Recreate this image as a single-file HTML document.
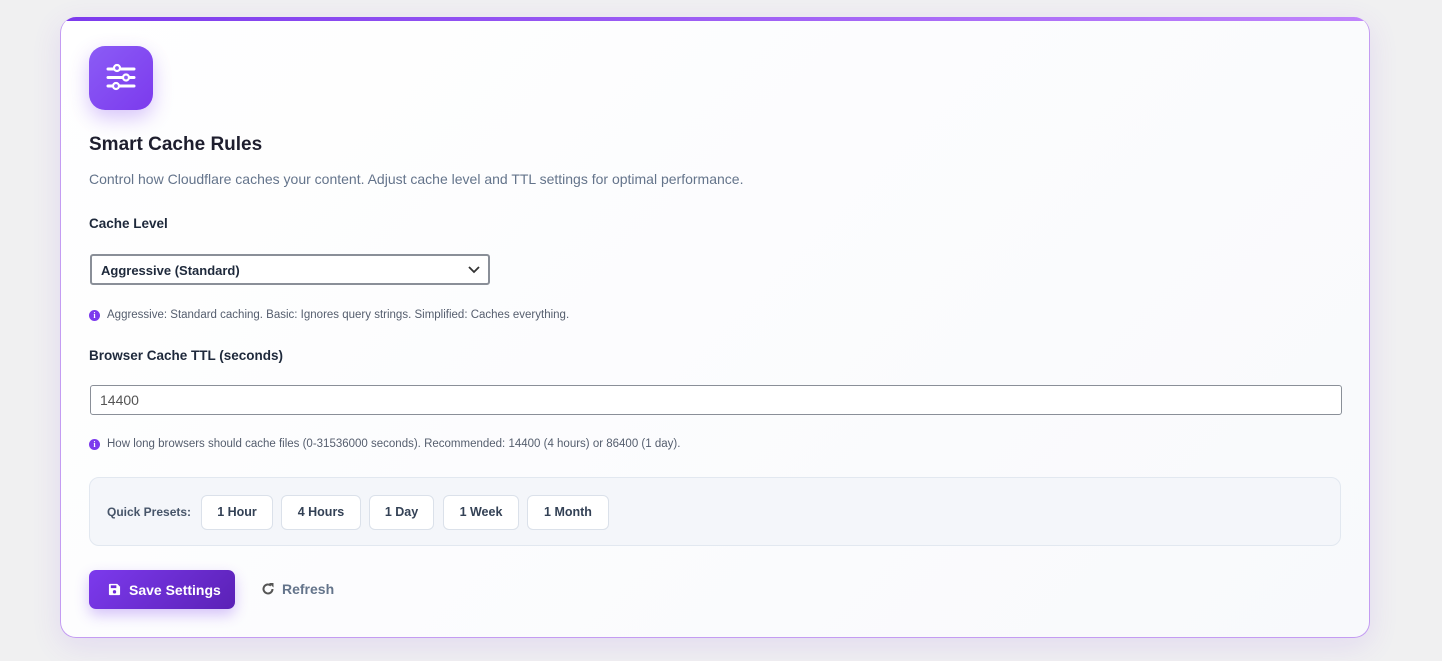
<!DOCTYPE html>
<html><head><style>
*{box-sizing:border-box;margin:0;padding:0}
body{width:1442px;height:661px;background:#f0f0f1;font-family:"Liberation Sans",sans-serif;position:relative;overflow:hidden}
.card{position:absolute;left:60px;top:17px;width:1310px;height:621px;background:linear-gradient(135deg,#ffffff,#f8f9fc);border:1px solid #c49cf2;border-top:none;border-radius:16px;box-shadow:0 8px 30px rgba(124,58,237,.12);overflow:hidden}
.bar{position:absolute;left:0;top:0;right:0;height:4px;background:linear-gradient(90deg,#7c3aed,#c084fc)}
.icon{position:absolute;left:28px;top:29px;width:64px;height:64px;border-radius:16px;background:linear-gradient(135deg,#8b5cf6,#7c3aed);box-shadow:0 8px 20px rgba(124,58,237,.3)}
.abs{position:absolute}
h2{position:absolute;left:28px;top:117px;font-size:19px;font-weight:bold;color:#1e1e2e}
.desc{left:28px;top:154px;font-size:14px;color:#64748b}
.lbl{font-size:13.5px;font-weight:bold;color:#1e293b;left:28px}
.sel{left:29px;top:237px;width:400px;height:31px;border:2px solid #8a8f98;border-radius:3px;background:#fff;font-size:13px;font-weight:bold;color:#1e293b;padding:7px 9px}
.inp{left:29px;top:368px;width:1252px;height:30px;border:1px solid #8a8f98;border-radius:3px;background:#fff;font-size:14px;color:#555;padding:6px 9px}
.hint{left:28px;font-size:11.5px;color:#555e6e;display:flex;align-items:center;gap:7px}
.i{width:11px;height:11px;border-radius:50%;background:#7c3aed;color:#fff;font-size:8px;font-weight:bold;text-align:center;line-height:11px;font-family:"Liberation Serif",serif}
.pre{left:28px;top:460px;width:1252px;height:69px;border:1px solid #e2e8f0;border-radius:10px;background:#f4f6fa}
.pre span{position:absolute;left:17px;top:27px;font-size:12px;font-weight:bold;color:#475569}
.b{position:absolute;top:17px;height:35px;border:1px solid #dbe1ea;border-radius:6px;background:#fff;font-size:12.5px;font-weight:bold;color:#334155;text-align:center;line-height:33px}
.save{left:28px;top:553px;width:146px;height:39px;border-radius:7px;background:linear-gradient(135deg,#7c3aed,#5b21b6);color:#fff;font-size:14px;font-weight:bold;box-shadow:0 6px 14px rgba(124,58,237,.3);display:flex;align-items:center;padding-left:19px;gap:8px}
.ref{left:200px;top:564px;font-size:14px;font-weight:bold;color:#64748b;display:flex;align-items:center;gap:7px}
</style></head><body>
<div class="card">
<div class="bar"></div>
<div class="icon"><svg width="64" height="64" viewBox="0 0 64 64"><g stroke="#fff" stroke-width="3" stroke-linecap="round" fill="none"><line x1="19" y1="23" x2="45" y2="23"/><line x1="19" y1="31.5" x2="45" y2="31.5"/><line x1="19" y1="40" x2="45" y2="40"/></g><g fill="#8b5cf6" stroke="#fff" stroke-width="2.2"><circle cx="28" cy="22" r="3"/><circle cx="37" cy="31.5" r="3"/><circle cx="27" cy="40" r="3"/></g></svg></div>
<h2>Smart Cache Rules</h2>
<div class="abs desc">Control how Cloudflare caches your content. Adjust cache level and TTL settings for optimal performance.</div>
<div class="abs lbl" style="top:199px">Cache Level</div>
<div class="abs sel">Aggressive (Standard)<svg style="position:absolute;right:8px;top:10px" width="12" height="8" viewBox="0 0 12 8"><path d="M1 1l5 5 5-5" stroke="#333" stroke-width="1.8" fill="none"/></svg></div>
<div class="abs hint" style="top:292px"><div class="i">i</div>Aggressive: Standard caching. Basic: Ignores query strings. Simplified: Caches everything.</div>
<div class="abs lbl" style="top:331px">Browser Cache TTL (seconds)</div>
<div class="abs inp">14400</div>
<div class="abs hint" style="top:421px"><div class="i">i</div>How long browsers should cache files (0-31536000 seconds). Recommended: 14400 (4 hours) or 86400 (1 day).</div>
<div class="abs pre"><span>Quick Presets:</span>
<div class="b" style="left:111px;width:72px">1 Hour</div>
<div class="b" style="left:191px;width:80px">4 Hours</div>
<div class="b" style="left:279px;width:65px">1 Day</div>
<div class="b" style="left:353px;width:76px">1 Week</div>
<div class="b" style="left:437px;width:82px">1 Month</div>
</div>
<div class="abs save"><svg width="13" height="13" viewBox="0 0 14 14"><path d="M1 2a1 1 0 0 1 1-1h8l3 3v8a1 1 0 0 1-1 1H2a1 1 0 0 1-1-1z" fill="#fff"/><rect x="3" y="2.5" width="6" height="3" fill="#6d28d9"/><circle cx="7" cy="9.5" r="1.8" fill="#6d28d9"/></svg>Save Settings</div>
<div class="abs ref"><svg width="14" height="14" viewBox="0 0 14 14"><path d="M11.5 7A4.5 4.5 0 1 1 10 3.6" stroke="#555" stroke-width="2" fill="none"/><path d="M8 1h4.5v4.5z" fill="#555"/></svg>Refresh</div>
</div>
</body></html>
